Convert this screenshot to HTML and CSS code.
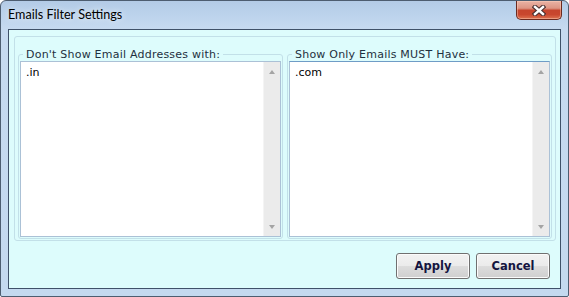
FILE: index.html
```html
<!DOCTYPE html>
<html lang="en">
<head>
<meta charset="utf-8">
<title>Emails Filter Settings</title>
<link rel="stylesheet" href="styles.css">
</head>
<body>
<div class="window">
  <div class="titlebar">
    <span class="title">Emails Filter Settings</span>
    <button class="close" aria-label="Close">
      <svg width="14" height="11" viewBox="0 0 14 11">
        <path d="M3 2 L11 9 M11 2 L3 9" stroke="#4a3030" stroke-width="4.6" stroke-linecap="square"/>
        <path d="M3 2 L11 9 M11 2 L3 9" stroke="#ffffff" stroke-width="2.4" stroke-linecap="square"/>
      </svg>
    </button>
  </div>
  <div class="client">
    <div class="panel">
      <fieldset class="group">
        <legend class="legend">Don't Show Email Addresses with:</legend>
        <div class="box">
          <textarea class="list">.in</textarea>
          <div class="scroll"><span class="arrow up"></span><span class="arrow down"></span></div>
        </div>
      </fieldset>
      <fieldset class="group">
        <legend class="legend">Show Only Emails MUST Have:</legend>
        <div class="box focused">
          <textarea class="list">.com</textarea>
          <div class="scroll"><span class="arrow up"></span><span class="arrow down"></span></div>
        </div>
      </fieldset>
    </div>
    <div class="actions">
      <button class="btn">Apply</button>
      <button class="btn">Cancel</button>
    </div>
  </div>
</div>
</body>
</html>
```

FILE: styles.css
```css
html, body {
  margin: 0;
  padding: 0;
  background: #ffffff;
}

.window {
  width: 569px;
  height: 297px;
  box-sizing: border-box;
  border: 1px solid #4d5d70;
  border-radius: 6px 6px 2px 2px;
  padding: 0 7px 7px 7px;
  background: linear-gradient(to bottom, #b3cbe6 0px, #bcd3ec 14px, #c6daf0 28px, #c4d9ef 100%);
  display: flex;
  flex-direction: column;
}

.titlebar {
  height: 28px;
  display: flex;
  justify-content: space-between;
  align-items: flex-start;
  flex: none;
}

.title {
  font-family: "Lato", "Noto Sans", sans-serif;
  font-size: 12.6px;
  line-height: 16px;
  margin-top: 6px;
  color: #000000;
  text-shadow: 0 0 6px rgba(255, 255, 255, 0.9);
}

.close {
  width: 46px;
  height: 19px;
  margin: 0 -1px 0 0;
  padding: 0;
  border: 1px solid #6b2a20;
  border-top: none;
  border-radius: 0 0 5px 5px;
  background: linear-gradient(to bottom, #eab3a5 0%, #de9584 40%, #c6452d 52%, #c9472e 75%, #dd7250 100%);
  box-shadow: inset 0 0 0 1px rgba(255, 210, 190, 0.45);
  display: flex;
  align-items: center;
  justify-content: center;
}

.client {
  flex: 1;
  border: 1px solid #3f5169;
  background: #ddfcfc;
  display: flex;
  flex-direction: column;
}

.panel {
  margin: 6px 4px 0 5px;
  height: 205px;
  box-sizing: border-box;
  border: 1px solid #c2e0e8;
  border-radius: 3px;
  padding: 11px 3px 1px 3px;
  display: flex;
  gap: 4px;
}

.group {
  flex: 1;
  min-width: 0;
  margin: 0;
  padding: 0 1px 1px 1px;
  border: 1px solid #c2e0e8;
  border-radius: 3px;
  display: flex;
  flex-direction: column;
}

.legend {
  margin-left: 3px;
  padding: 0 3px;
  font-family: "DejaVu Sans", Verdana, sans-serif;
  font-size: 11px;
  letter-spacing: 0.22px;
  line-height: 13px;
  color: #1e3040;
}

.box {
  flex: 1;
  display: flex;
  border: 1px solid #abc1d6;
  background: #ffffff;
}

.box.focused {
  border-top-color: #6f9cc6;
}

.list {
  flex: 1;
  min-width: 0;
  border: none;
  outline: none;
  resize: none;
  margin: 0;
  padding: 4px 5px 3px 5px;
  font-family: "DejaVu Sans", Verdana, sans-serif;
  font-size: 11px;
  line-height: 13px;
  color: #000000;
  background: #ffffff;
  overflow: hidden;
}

.scroll {
  width: 17px;
  flex: none;
  background: #ebebeb;
  border-left: 1px solid #f4f4f4;
  box-sizing: border-box;
  display: flex;
  flex-direction: column;
  justify-content: space-between;
  align-items: center;
  padding: 8px 0 7px 0;
}

.arrow {
  width: 0;
  height: 0;
  border-left: 3.5px solid transparent;
  border-right: 3.5px solid transparent;
}

.arrow.up {
  border-bottom: 4px solid #a4a4a4;
}

.arrow.down {
  border-top: 4px solid #a4a4a4;
}

.actions {
  display: flex;
  justify-content: flex-end;
  gap: 6px;
  margin-top: 12px;
  padding-right: 10px;
}

.btn {
  width: 74px;
  height: 26px;
  padding: 0;
  border: 1px solid #707070;
  border-radius: 3px;
  background: linear-gradient(to bottom, #f2f2f2 0%, #ebebeb 50%, #dddddd 50%, #cfcfcf 100%);
  box-shadow: inset 0 0 0 1px #fbfbfb;
  font-family: "DejaVu Sans", Verdana, sans-serif;
  font-weight: bold;
  font-size: 11.5px;
  color: #141440;
}
```
